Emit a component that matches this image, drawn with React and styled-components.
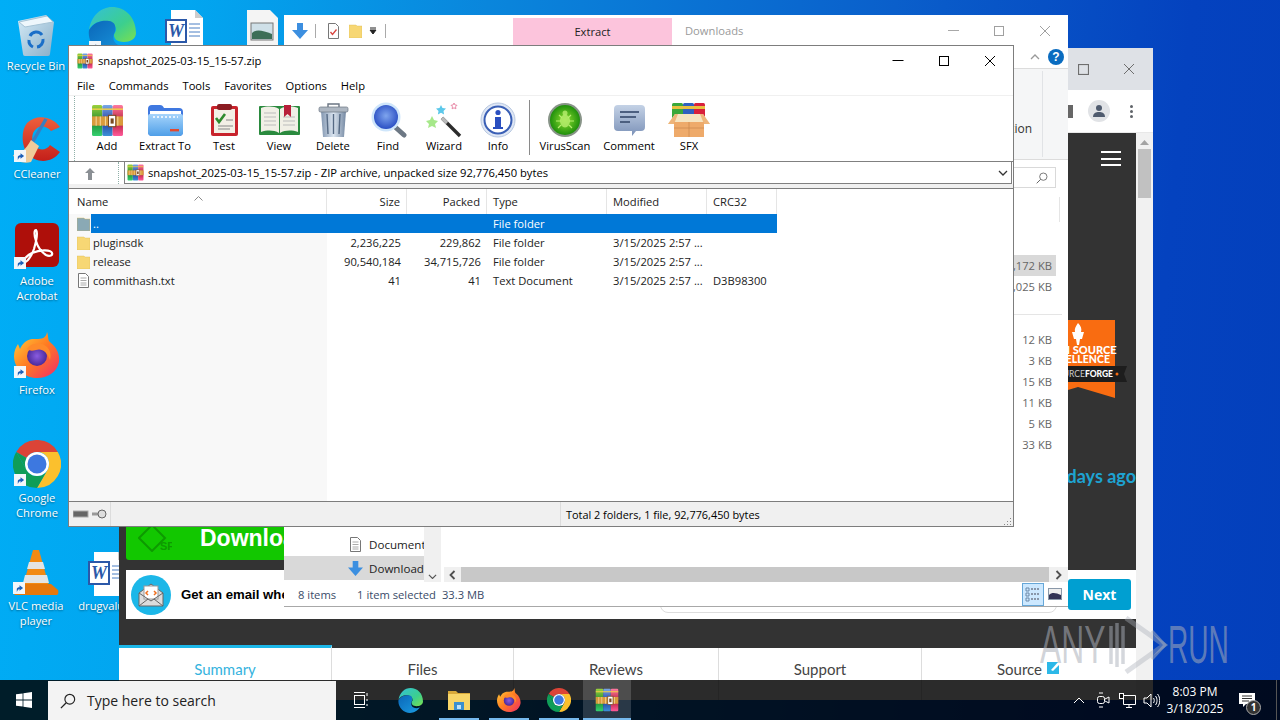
import React from "react";
import styled, { createGlobalStyle } from "styled-components";

const Global = createGlobalStyle`
  html, body { margin: 0; padding: 0; width: 1280px; height: 720px; overflow: hidden; }
  body { font-family: "Open Sans", "Noto Sans", sans-serif; }
  * { box-sizing: border-box; }
`;

const UI = `"Open Sans", "Noto Sans", sans-serif`;

const Desktop = styled.div`
  position: relative; width: 1280px; height: 720px; overflow: hidden;
  background: linear-gradient(96deg, #00aef6 0%, #02a6f0 14%, #0a86dc 36%, #0a5fcb 66%, #0442bf 88%, #033fbb 100%);
  font-family: ${UI}; font-size: 11.2px; color: #000;
`;

/* ---- desktop shortcuts ---- */
const Shortcut = styled.div`
  position: absolute; left: ${p => p.$x}px; top: ${p => p.$y}px; width: 72px;
  display: flex; flex-direction: column; align-items: center;
`;
const ShortcutArt = styled.div`
  position: relative; height: 50px; width: 100%;
  display: flex; align-items: flex-end; justify-content: center;
`;
const ShortcutBadge = styled.span`
  position: absolute; left: 13px; bottom: 2px; width: 12px; height: 12px; background: #f2f6fa;
  display: flex; align-items: center; justify-content: center;
`;
const ShortcutLabel = styled.div`
  margin-top: 2px; color: #fff; font-size: 11.2px; line-height: 15px; text-align: center; white-space: pre-line;
  text-shadow: 0 1px 2px rgba(0,0,0,.45);
`;

/* ---- shared window bits ---- */
const Win = styled.section`
  position: absolute; left: ${p => p.$x}px; top: ${p => p.$y}px; width: ${p => p.$w}px; height: ${p => p.$h}px;
  display: flex; flex-direction: column; overflow: hidden;
`;
const CtrlRow = styled.div`
  display: flex; margin-left: auto; height: 100%; align-items: center;
`;
const CtrlBtn = styled.span`
  width: 46px; display: flex; justify-content: center; align-items: center;
`;

/* ---- browser ---- */
const BrowserTitle = styled.div`
  height: 42px; flex: none; background: #dee1e6; display: flex; padding-right: 1px;
`;
const BrowserBar = styled.div`
  height: 43px; flex: none; background: #fff; display: flex; align-items: center; justify-content: flex-end;
  padding-right: 20px; border-bottom: 1px solid #e8e8e8;
`;
const ExtensionStub = styled.span` width: 5px; height: 13px; background: #666; margin-right: 15px; `;
const Avatar = styled.span`
  width: 22px; height: 22px; border-radius: 50%; background: #e1e3e6; display: flex; align-items: center; justify-content: center;
  margin-right: 20px;
`;
const Dots = styled.span`
  display: flex; flex-direction: column; gap: 2px;
  i { width: 3px; height: 3px; border-radius: 50%; background: #5f6368; display: block; }
`;
const BrowserBody = styled.div` flex: 1; display: flex; min-height: 0; `;
const Page = styled.div` flex: 1; background: #333; display: flex; flex-direction: column; font-family: Lato, sans-serif; `;
const PageUpper = styled.div`
  height: 437px; flex: none; padding: 18px 0 10px 7px; display: flex; flex-direction: column;
`;
const Burger = styled.span`
  align-self: flex-end; margin-right: 15px; width: 20px; height: 15px;
  display: flex; flex-direction: column; justify-content: space-between;
  i { display: block; height: 2px; background: #fff; }
`;
const Badge = styled.div` align-self: flex-end; margin: 153px 6px 0 0; height: 81px; `;
const Updated = styled.div`
  align-self: flex-end; margin-top: 64px; color: #1ea3d2; font-size: 18px; font-weight: 700; line-height: 24px; white-space: nowrap;
`;
const DownloadBtn = styled.div`
  margin-top: auto; width: 640px; height: 44px; background: #12c700; border-radius: 3px;
  display: flex; align-items: center; padding-left: 12px; color: #fff;
  font: 700 23px "Liberation Sans", sans-serif;
`;
const SfMark = styled.span` width: 62px; flex: none; display: flex; `;
const EmailRow = styled.div`
  height: 49px; flex: none; margin-left: 7px; background: #fff; display: flex; align-items: center; padding: 0 5px;
`;
const EmailBadge = styled.span`
  width: 40px; height: 40px; border-radius: 50%; background: #1cb7e8; display: flex; align-items: center; justify-content: center; flex: none;
`;
const EmailText = styled.span`
  margin-left: 10px; font: 700 13.2px "Liberation Sans", sans-serif; color: #000; white-space: nowrap;
`;
const EmailInput = styled.span`
  margin-left: auto; align-self: flex-end; margin-bottom: 6px; width: 397px; height: 24px;
  border: 1px solid #ddd; border-radius: 8px;
`;
const NextBtn = styled.span`
  margin-left: 11px; width: 63px; height: 31px; border-radius: 3px; background: #009fd1; color: #fff;
  display: flex; align-items: center; justify-content: center; font: 700 14px "Open Sans", sans-serif;
`;
const PageGap = styled.div` height: 26px; flex: none; `;
const Tabs = styled.div` height: 55px; flex: none; display: flex; `;
const PageTab = styled.div`
  width: ${p => p.$w}px; background: #fff; margin-top: ${p => p.$on ? 0 : 3}px; padding-top: 12px;
  border-top: ${p => p.$on ? "3px solid #1cb7e8" : "0 solid transparent"};
  border-right: ${p => p.$end ? 0 : "1px solid #ddd"};
  color: ${p => p.$on ? "#35b3de" : "#444"}; font-size: 15px; line-height: 18px; text-align: center;
  display: flex; justify-content: center; align-items: flex-start; gap: 5px;
`;
const Scrollbar = styled.div`
  width: 17px; flex: none; background: #f1f1f1; display: flex; flex-direction: column; align-items: center; padding-top: 7px;
`;
const ScrollThumb = styled.span` width: 13px; height: 49px; background: #c1c1c1; margin-top: 4px; `;

/* ---- explorer ---- */
const ExplorerFrame = styled(Win)` background: #fff; border-bottom: 1px solid #a8a8a8; `;
const ExTitle = styled.div` height: 31px; flex: none; display: flex; align-items: center; `;
const QuickBar = styled.div` width: 229px; flex: none; display: flex; align-items: center; padding-left: 8px; `;
const QuickIcon = styled.span` display: flex; margin-left: ${p => p.$m}px; `;
const QuickSep = styled.span` width: 1px; height: 14px; background: #aaa; margin-left: ${p => p.$m}px; `;
const ContextTab = styled.div`
  width: 159px; height: 27px; align-self: flex-start; margin-top: 3px; background: #fcc4dc; display: flex; align-items: center; justify-content: center;
  font-size: 11.2px; color: #222;
`;
const TitleGhost = styled.div` margin-left: 13px; color: #9a9a9a; font-size: 11.2px; `;
const RibbonTabs = styled.div`
  height: 23px; flex: none; display: flex; justify-content: flex-end; align-items: center; padding-right: 4px; gap: 8px;
  border-bottom: 1px solid #dcdcdc;
`;
const Help = styled.span`
  width: 16px; height: 16px; border-radius: 50%; background: #0a6cc0; color: #fff;
  font: 700 12px/16px "Liberation Sans", sans-serif; text-align: center;
`;
const Ribbon = styled.div`
  height: 91px; flex: none; background: #f5f6f7; border-bottom: 1px solid #dcdcdc;
  display: flex; align-items: center; justify-content: flex-end; padding-right: 25px;
`;
const RibbonGroup = styled.div` font-size: 12px; color: #333; margin-right: 10px; margin-top: 28px; `;
const RibbonRule = styled.span` width: 1px; height: 86px; background: #e1e3e6; `;
const ExAddress = styled.div` height: 30px; flex: none; display: flex; justify-content: flex-end; align-items: flex-start; padding: 7px 12px 0 0; `;
const SearchBox = styled.div`
  width: 220px; height: 21px; border: 1px solid #d9d9d9; display: flex; align-items: center; justify-content: flex-end; padding-right: 7px;
`;
const ExBody = styled.div` flex: 1; min-height: 0; display: flex; `;
const NavPane = styled.div`
  width: 140px; flex: none; display: flex; flex-direction: column; justify-content: flex-end; padding-bottom: 2px;
`;
const NavRow = styled.div`
  height: 24px; flex: none; display: flex; align-items: center; gap: 6px; padding-left: 64px; overflow: hidden; white-space: nowrap;
  background: ${p => p.$on ? "#d9d9d9" : "transparent"}; color: #222; font-size: 11.6px;
`;
const NavGlyph = styled.span` width: 15px; flex: none; display: flex; justify-content: center; `;
const NavScroll = styled.div`
  width: 17px; flex: none; background: #f0f0f0; display: flex; align-items: flex-end; justify-content: center; padding-bottom: 3px;
`;
const FileArea = styled.div` flex: 1; min-width: 0; margin-left: 3px; display: flex; flex-direction: column; `;
const FileList = styled.div` flex: 1; min-height: 0; padding: 7px 12px 0 0; display: flex; flex-direction: column; `;
const ColumnRule = styled.span` align-self: flex-end; width: 1px; height: 25px; flex: none; background: #e5e5e5; margin-right: -4px; margin-bottom: 33px; `;
const FileRow = styled.div`
  height: 21px; flex: none; width: 43px; align-self: flex-end; padding-right: 4px;
  display: flex; align-items: center; justify-content: flex-end; font-size: 11.2px; color: #666; white-space: nowrap;
  background: ${p => p.$on ? "#d9d9d9" : "transparent"};
`;
const GroupRule = styled.span` height: 1px; flex: none; background: #e5e5e5; margin: 17px -6px 14px 0; `;
const HScroll = styled.div` height: 15px; flex: none; display: flex; align-items: center; background: #f0f0f0; `;
const HArrow = styled.span` width: ${p => p.$w}px; flex: none; display: flex; justify-content: center; `;
const HThumb = styled.span` flex: 1; height: 100%; background: #c8c8c8; `;
const ExStatus = styled.div` height: 24px; flex: none; display: flex; align-items: center; color: #3a4c68; font-size: 11.2px; padding: 0 6px 0 14px; `;
const ExStat = styled.span` margin-right: ${p => p.$m}px; white-space: nowrap; `;
const ViewBtn = styled.span`
  margin-left: ${p => p.$auto ? "auto" : "4px"}; width: ${p => p.$on ? 22 : 14}px; height: ${p => p.$on ? 23 : 14}px;
  display: flex; align-items: center; justify-content: center;
  background: ${p => p.$on ? "#cce8ff" : "transparent"}; border: ${p => p.$on ? "1px solid #66a7d8" : "0"};
`;

/* ---- WinRAR ---- */
const RarFrame = styled(Win)` background: #fff; border: 1px solid #7d7d7d; `;
const RarTitle = styled.div` height: 29px; flex: none; display: flex; align-items: center; padding-left: 8px; gap: 5px; font-size: 11.2px; `;
const RarMenu = styled.div` height: 20px; flex: none; display: flex; align-items: center; padding-left: 8px; gap: 14px; font-size: 11.2px; `;
const RarToolbar = styled.div`
  height: 66px; flex: none; border-top: 1px solid #f0f0f0; display: flex; padding-left: 5px;
`;
const Grip = styled.span` width: 1px; flex: none; margin-right: 5px; border-left: 1px dotted #8fb0a8; `;
const Tool = styled.div`
  width: ${p => p.$w}px; flex: none; display: flex; flex-direction: column; align-items: center; padding-top: 6px; font-size: 11.2px; line-height: 16px; white-space: nowrap;
`;
const ToolArt = styled.div` height: 36px; flex: none; display: flex; align-items: center; justify-content: center; `;
const ToolSep = styled.span` width: 1px; flex: none; margin: 4px 0 6px 5px; background: #8a8a8a; `;
const AddressRow = styled.div`
  height: 23px; flex: none; border-top: 1px solid #808080; display: flex; align-items: stretch;
`;
const UpCell = styled.div` width: 55px; flex: none; display: flex; align-items: center; padding-left: 15px; `;
const AddressGrip = styled.span` margin-left: auto; margin-right: 5px; width: 1px; height: 100%; border-left: 1px dotted #8fb0a8; `;
const Combo = styled.div`
  flex: 1; margin-right: 1px; border-left: 1px solid #808080; border-bottom: 1px solid #808080; border-right: 1px solid #808080; display: flex; align-items: center; gap: 4px; padding-left: 2px; font-size: 11.2px;
  svg:last-child { margin-left: auto; margin-right: 3px; }
`;
const ListGap = styled.div` height: 4px; flex: none; background: #f0f0f0; `;
const ListPane = styled.div`
  flex: 1; min-height: 0; border-top: 1px solid #7d7d7d;
  background: linear-gradient(to right, #f8f8f8 258px, #fff 258px);
  position: relative;
`;
const COLS = "258px 80px 80px 120px 100px 70px";
const ListHead = styled.div` display: grid; grid-template-columns: ${COLS}; width: 708px; height: 25px; background: #fff; `;
const HeadCell = styled.div`
  padding: 0 ${p => p.$r ? 6 : 0}px 0 ${p => p.$i || 0}px; line-height: 25px; text-align: ${p => p.$r ? "right" : "left"};
  border-right: 1px solid #e5e5e5; font-size: 11.2px; color: #222; white-space: nowrap;
`;
const SortCaret = styled.span` position: absolute; left: 125px; top: 0; `;
const ListRow = styled.div`
  display: grid; grid-template-columns: ${COLS}; width: 708px; height: 19px; line-height: 19px; font-size: 11.2px;
  color: ${p => p.$on ? "#fff" : "#222"}; white-space: nowrap;
  background: ${p => p.$on ? "linear-gradient(to right, transparent 22px, #0078d7 22px)" : "transparent"};
`;
const NameCell = styled.div` padding-left: 8px; display: flex; align-items: center; gap: 3px; `;
const ListCell = styled.div`
  padding: 0 ${p => p.$r ? 6 : 0}px 0 ${p => p.$i || 0}px; text-align: ${p => p.$r ? "right" : "left"}; overflow: hidden;
`;
const RarStatus = styled.div` height: 25px; flex: none; border-top: 1px solid #7d7d7d; background: #f0f0f0; display: flex; align-items: stretch; font-size: 10.9px; `;
const StatusCell = styled.div`
  width: ${p => p.$w}px; flex: none; border-right: 1px solid #dcdcdc; display: flex; align-items: center; padding-left: 4px;
`;
const StatusText = styled.div` flex: 1; display: flex; align-items: center; padding: 0 1px 0 5px; svg { margin-left: auto; align-self: flex-end; } `;

/* ---- taskbar ---- */
const Taskbar = styled.footer`
  position: absolute; left: 0; top: 680px; width: 1280px; height: 40px; background: rgba(0,0,0,.83); display: flex; color: #fff;
`;
const Start = styled.div` width: 48px; flex: none; display: flex; align-items: center; justify-content: center; `;
const SearchField = styled.div`
  width: 288px; margin-top: 1px; flex: none; background: #f3f3f3; color: #222; display: flex; align-items: center; gap: 11px; padding-left: 12px;
  font-size: 14px;
`;
const TaskApp = styled.div`
  width: ${p => p.$w}px; flex: none; position: relative; display: flex; align-items: center; justify-content: center;
  background: ${p => p.$on ? "rgba(255,255,255,.16)" : "transparent"};
`;
const Running = styled.i`
  position: absolute; bottom: 0; left: 50%; transform: translateX(-50%); height: 2px; width: ${p => p.$full ? "100%" : "40px"}; background: #76b9ed;
`;
const Tray = styled.div` margin-left: auto; display: flex; align-items: stretch; `;
const TrayIcon = styled.span` width: 24px; display: flex; align-items: center; justify-content: center; `;
const Clock = styled.div`
  width: 64px; font-size: 12px; line-height: 17px; text-align: center; display: flex; flex-direction: column; justify-content: center; white-space: nowrap;
`;
const Notify = styled.span` width: 40px; display: flex; align-items: center; justify-content: center; position: relative; `;
const NotifyCount = styled.span`
  position: absolute; left: 19px; top: 20px; width: 15px; height: 15px; border-radius: 50%; background: #333; border: 1px solid #aaa;
  font-size: 10px; line-height: 13px; text-align: center; color: #fff; font-weight: 700;
`;
const ShowDesktop = styled.span` width: 1px; margin: 0 3px 0 9px; background: #555; `;

/* ---- watermark ---- */
const Watermark = styled.div`
  position: absolute; left: 1040px; top: 616px; height: 58px; display: flex; align-items: center; pointer-events: none;
`;
const WmText = styled.span`
  font: 400 53px/58px "Liberation Sans", sans-serif; color: rgba(170,175,185,.55); transform: scaleX(${p => p.$s}); transform-origin: left center;
  width: ${p => p.$w}px; white-space: nowrap; display: block;
`;

/* ---- drawings ---- */
const Close = ({ c = "#000", s = 12 }) => (
  <svg width={s} height={s} viewBox="0 0 12 12"><path d="M1 1l10 10M11 1L1 11" stroke={c} strokeWidth="1" fill="none" /></svg>
);
const Max = ({ c = "#000", s = 10 }) => (
  <svg width={s} height={s} viewBox="0 0 10 10"><rect x=".5" y=".5" width="9" height="9" stroke={c} fill="none" /></svg>
);
const Min = ({ c = "#000", s = 11 }) => (
  <svg width={s} height="3" viewBox="0 0 11 3"><path d="M0 1.5h11" stroke={c} /></svg>
);
const Arrow = () => (
  <svg width="9" height="9" viewBox="0 0 10 10"><path d="M2 9V5.5C2 4 3.5 3.5 5 3.5V1.5L9 4.5 5 7.5V5.5C4 5.5 3 6.5 2 9z" fill="#1b5fb8" /></svg>
);

const RarIcon = ({ s = 32 }) => (
  <svg width={s} height={s} viewBox="0 0 32 32">
    <defs>
      <linearGradient id="rg" x1="0" x2="0" y1="0" y2="1"><stop offset="0" stopColor="#9bd13c" /><stop offset=".55" stopColor="#1f8a2f" /><stop offset="1" stopColor="#35d070" /></linearGradient>
      <linearGradient id="rb" x1="0" x2="0" y1="0" y2="1"><stop offset="0" stopColor="#78a8e8" /><stop offset=".55" stopColor="#243fa0" /><stop offset="1" stopColor="#3c90d8" /></linearGradient>
      <linearGradient id="rr" x1="0" x2="0" y1="0" y2="1"><stop offset="0" stopColor="#ff7aa0" /><stop offset=".55" stopColor="#b51f3a" /><stop offset="1" stopColor="#ff5a9a" /></linearGradient>
    </defs>
    <rect x="1" y="1" width="10" height="30" rx="1.5" fill="url(#rg)" />
    <rect x="11" y="1" width="10" height="30" rx="1.5" fill="url(#rb)" />
    <rect x="21" y="1" width="10" height="30" rx="1.5" fill="url(#rr)" />
    <path d="M1 5h30" stroke="#f3d048" strokeWidth="1.400" />
    <rect x="1" y="12" width="30" height="9" fill="#d99b3c" />
    <path d="M5 12v9M9 12v9M14 12v9M26 12v9" stroke="#f4d79a" strokeWidth="1" />
    <rect x="17" y="11" width="7" height="11" fill="#fff" stroke="#7a4a20" />
    <rect x="19" y="14" width="3" height="5" fill="#7a4a20" />
  </svg>
);
const IcExtract = () => (
  <svg width="37" height="34" viewBox="0 0 37 34">
    <defs><linearGradient id="fe" x1="0" x2="0" y1="0" y2="1"><stop offset="0" stopColor="#a6d4fb" /><stop offset="1" stopColor="#4f9fe8" /></linearGradient></defs>
    <path d="M1 6a4 4 0 014-4h8c2 0 3 1 4 3h15a4 4 0 014 4v20a4 4 0 01-4 4H5a4 4 0 01-4-4z" fill="#3f78e0" />
    <rect x="3" y="8" width="31" height="5" fill="#fff" />
    <path d="M1 13a2 2 0 012-2h31a2 2 0 012 2v16a4 4 0 01-4 4H5a4 4 0 01-4-4z" fill="url(#fe)" />
    <path d="M6 14h25" stroke="#fff" strokeDasharray="2 2" strokeWidth="1.4" />
    <rect x="23" y="26" width="9" height="2.4" fill="#e2492f" />
  </svg>
);
const IcTest = () => (
  <svg width="29" height="34" viewBox="0 0 29 34">
    <rect x="1" y="3" width="27" height="30" rx="2" fill="#c8232c" />
    <rect x="4" y="6" width="21" height="24" fill="#f3f0e6" />
    <rect x="7" y="1" width="15" height="6" rx="2" fill="#8b1c22" />
    <path d="M6 15l3 4 6-8" stroke="#2e8b2e" strokeWidth="2.6" fill="none" />
    <path d="M16 17h7M8 23h15M8 26h12" stroke="#888" strokeWidth="1.2" />
  </svg>
);
const IcView = () => (
  <svg width="43" height="32" viewBox="0 0 43 32">
    <rect x="1" y="2" width="41" height="29" rx="1" fill="#2a8a3e" />
    <path d="M3 4c6-2 13-2 18 1v24c-5-3-12-3-18-1zM40 4c-6-2-13-2-18 1v24c5-3 12-3 18-1z" fill="#f1efe6" />
    <path d="M6 9h12M6 13h12M6 17h12M6 21h12M25 13h12M25 17h12M25 21h12" stroke="#bbb" />
    <path d="M26 1h7v12l-3.5-3-3.5 3z" fill="#b81f3a" />
  </svg>
);
const IcTrash = () => (
  <svg width="31" height="36" viewBox="0 0 31 36">
    <defs><linearGradient id="tb" x1="0" x2="1" y1="0" y2="0"><stop offset="0" stopColor="#8296b0" /><stop offset=".5" stopColor="#dbe5f0" /><stop offset="1" stopColor="#7488a2" /></linearGradient></defs>
    <path d="M3 9h25l-2 26H5z" fill="url(#tb)" />
    <path d="M9 12l1 20M15.5 12v20M22 12l-1 20" stroke="#566a84" strokeWidth="1.4" />
    <rect x="1" y="5" width="29" height="5" rx="1.5" fill="#aeb7c2" stroke="#6b7583" strokeWidth=".7" />
    <path d="M10 5V2h11v3" stroke="#6b7583" strokeWidth="1.4" fill="none" />
  </svg>
);
const IcFind = () => (
  <svg width="37" height="36" viewBox="0 0 37 36">
    <defs><radialGradient id="fg" cx=".5" cy=".45" r=".6"><stop offset="0" stopColor="#7fa5ee" /><stop offset="1" stopColor="#2348c0" /></radialGradient></defs>
    <path d="M24 24l10 9" stroke="#6d7884" strokeWidth="5" strokeLinecap="round" />
    <circle cx="16" cy="15" r="14.5" fill="#cfe6fb" />
    <circle cx="16" cy="15" r="12" fill="url(#fg)" />
  </svg>
);
const IcWand = () => (
  <svg width="39" height="36" viewBox="0 0 39 36">
    <path d="M17 16l18 18" stroke="#2c2c2c" strokeWidth="3.4" />
    <path d="M17 16l5 5" stroke="#bbb" strokeWidth="3.4" />
    <path d="M7 14l2 4 4 1-3 3 1 4-4-2-4 2 1-4-3-3 4-1z" fill="#a6e88a" />
    <path d="M16 3l1.5 3 3.5.5-2.5 2.500.6 3.500-3.100-1.700-3.100 1.700.6-3.500L11 6.500l3.500-.5z" fill="#5cc8ea" />
    <path d="M29 1l1 2 2 .3-1.500 1.500.4 2-1.900-1-1.900 1 .4-2L26 3.300 28 3z" fill="none" stroke="#e88aa8" />
  </svg>
);
const IcInfo = () => (
  <svg width="36" height="36" viewBox="0 0 36 36">
    <circle cx="18" cy="18" r="17" fill="#dfe7f5" stroke="#b8c8e0" />
    <circle cx="18" cy="18" r="13.500" fill="#fff" stroke="#3a5fb5" strokeWidth="2" />
    <circle cx="18" cy="10.500" r="2.600" fill="#2a4fc0" />
    <path d="M15 15h6v10h2v2h-10v-2h2z" fill="#2a4fc0" />
  </svg>
);
const IcVirus = () => (
  <svg width="36" height="36" viewBox="0 0 36 36">
    <defs><radialGradient id="vg"><stop offset="0" stopColor="#8fe030" /><stop offset="1" stopColor="#1f8f0c" /></radialGradient></defs>
    <circle cx="18" cy="18" r="17" fill="#889488" />
    <circle cx="18" cy="18" r="15" fill="url(#vg)" />
    <ellipse cx="18" cy="19" rx="5" ry="6.500" fill="#b8ee70" opacity=".8" />
    <circle cx="18" cy="11" r="2.500" fill="#b8ee70" opacity=".8" />
    <path d="M12 13l3 3M24 13l-3 3M9 19h5M27 19h-5M11 26l3-3M25 26l-3-3" stroke="#b8ee70" strokeWidth="1.2" />
  </svg>
);
const IcComment = () => (
  <svg width="33" height="33" viewBox="0 0 33 33">
    <defs><linearGradient id="cg" x1="0" x2="0" y1="0" y2="1"><stop offset="0" stopColor="#c4d2e6" /><stop offset="1" stopColor="#7c92b8" /></linearGradient></defs>
    <path d="M5 1h23a4 4 0 014 4v18a4 4 0 01-4 4h-5l-4 5v-5H5a4 4 0 01-4-4V5a4 4 0 014-4z" fill="url(#cg)" />
    <path d="M7 8h19M7 13h16M7 18h10" stroke="#4c5f80" strokeWidth="2" />
  </svg>
);
const IcSfx = () => (
  <svg width="42" height="36" viewBox="0 0 42 36">
    <rect x="4" y="1" width="11" height="16" rx="1.500" fill="#3aa83a" /><rect x="15" y="1" width="11" height="16" rx="1.500" fill="#3060c0" /><rect x="26" y="1" width="11" height="16" rx="1.500" fill="#d8203c" />
    <rect x="4" y="4" width="33" height="3" fill="#e8c040" />
    <path d="M7 12h28l7 10H0z" fill="#f6e4c0" />
    <path d="M7 12L0 22h6l4-10zM35 12l7 10h-6l-4-10z" fill="#eeb57a" />
    <path d="M6 20h30v15H6z" fill="#eeaa6a" />
    <path d="M21 20v15M6 26h30" stroke="#c8874a" strokeWidth=".7" />
  </svg>
);
const MiniFolder = ({ c = "#f7d774", s = 13 }) => (
  <svg width={s} height={s + 1} viewBox="0 0 13 14"><path d="M0 1h7l1 1h5v12H0z" fill={c} stroke="#d8b850" strokeWidth=".4" /></svg>
);
const MiniDoc = ({ s = 13 }) => (
  <svg width={s} height={s + 2} viewBox="0 0 13 15"><path d="M1.500.5h7l3 3v11h-10z" fill="#fff" stroke="#777" /><path d="M3.500 5h6M3.500 7.500h6M3.500 10h6M3.500 12h6" stroke="#aaa" /></svg>
);
const MiniProps = () => (
  <svg width="13" height="16" viewBox="0 0 13 16"><path d="M1.500.5h7l3 3v12h-10z" fill="#fdfdfd" stroke="#777" /><path d="M3.500 9l2 2.500 4-5" stroke="#d8423c" strokeWidth="1.300" fill="none" /></svg>
);
const DownArrow = ({ s = 16 }) => (
  <svg width={s} height={s} viewBox="0 0 16 16"><path d="M5 0h6v7h5l-8 9-8-9h5z" fill="#3c8fe0" /></svg>
);
const WordDoc = () => (
  <svg width="38" height="44" viewBox="0 0 38 44">
    <path d="M6 0h24l8 8v36H6z" fill="#fff" />
    <path d="M30 0v8h8z" fill="#ccc" />
    <path d="M24 14h11M24 18h11M24 22h11M24 26h11" stroke="#4a7fc4" />
    <rect x="1" y="10" width="20" height="22" fill="#fff" stroke="#2b58a8" strokeWidth="2" />
    <text x="11" y="27" fontFamily="Liberation Serif" fontStyle="italic" fontWeight="700" fontSize="18" fill="#2b58a8" textAnchor="middle">W</text>
  </svg>
);
const ImageDoc = () => (
  <svg width="32" height="44" viewBox="0 0 32 44">
    <path d="M1 0h23l8 8v36H1z" fill="#f4f4f4" />
    <rect x="5" y="13" width="22" height="17" fill="#cfe0e8" stroke="#777" />
    <path d="M6 23c4-4 10-3 20 1v5H6z" fill="#3c6e58" />
  </svg>
);
const RecycleBin = () => (
  <svg width="40" height="42" viewBox="0 0 40 42">
    <defs><linearGradient id="bin" x1="0" x2="1" y1="0" y2="1"><stop offset="0" stopColor="#d6ecf8" /><stop offset="1" stopColor="#88aec8" /></linearGradient></defs>
    <path d="M2 7L30 1l8 7-4 32a2 2 0 01-2 2H9a2 2 0 01-2-2z" fill="url(#bin)" />
    <path d="M3 8l28-6 6 6-28 5z" fill="#eef7fc" stroke="#a6c4d6" />
    <path d="M14 22a7 7 0 0112-1M27 25a7 7 0 01-6 8M17 33a7 7 0 01-4-7" stroke="#1b6fc8" strokeWidth="3" fill="none" />
  </svg>
);
const EdgeIcon = ({ s = 48 }) => (
  <svg width={s} height={s} viewBox="0 0 48 48">
    <defs>
      <linearGradient id="e1" x1="0" x2="1" y1="0" y2="1"><stop offset="0" stopColor="#34c0d8" /><stop offset=".6" stopColor="#3ccf8e" /><stop offset="1" stopColor="#7be04f" /></linearGradient>
      <linearGradient id="e2" x1="0" x2="1" y1="0" y2="1"><stop offset="0" stopColor="#0a66b8" /><stop offset="1" stopColor="#1b9de2" /></linearGradient>
    </defs>
    <path d="M1 23C3 9 13 0 24 0c13 0 24 10 24 26 0 6-6 9-12 9-8 0-10-4-10-7 0-2 2-3 2-5 0-6-6-9-12-9C9 14 3 18 1 23z" fill="url(#e1)" />
    <path d="M1 23c5-8 13-10 20-9 8 1 7 9 5 13-3 9 6 15 16 10-4 6-11 11-19 11C10 48-1 35 1 23z" fill="url(#e2)" />
  </svg>
);
const CCleaner = () => (
  <svg width="48" height="48" viewBox="0 0 48 48">
    <defs><linearGradient id="cc" x1="0" x2="0" y1="0" y2="1"><stop offset="0" stopColor="#ee5f3c" /><stop offset="1" stopColor="#c41f1a" /></linearGradient></defs>
    <path d="M47 11C40 1 24-3 14 7 8 14 8 30 15 38c9 10 24 9 32-2l-10-7c-3 5-10 6-14 2-5-5-5-14 0-18 4-4 11-3 15 2z" fill="url(#cc)" />
    <path d="M33 3L19 27" stroke="#3a7fc0" strokeWidth="3.400" />
    <path d="M18 24l8 6-8 16C11 48 3 46 0 39c7 0 13-6 18-15z" fill="#eecb9a" />
  </svg>
);
const Acrobat = () => (
  <svg width="44" height="48" viewBox="0 0 44 48">
    <rect width="44" height="44" rx="6" fill="#ae0f0a" />
    <path d="M21 7c-2 0-2 5 0 11 2 7 7 12 10 14 4 2 7 0 6-2-1-3-11-4-20 0-6 3-10 8-8 9 3 1 8-7 10-13 2-7 4-17 2-19z" fill="none" stroke="#fff" strokeWidth="2.200" />
  </svg>
);
const Firefox = ({ s = 46, h = 48 }) => (
  <svg width={s} height={h * s / 46} viewBox={`0 0 46 ${h}`}>
    <defs>
      <linearGradient id="ff" x1="0" x2="1" y1="0" y2="1"><stop offset="0" stopColor="#ffd43a" /><stop offset=".5" stopColor="#ff7a22" /><stop offset="1" stopColor="#f02a6a" /></linearGradient>
      <radialGradient id="fp"><stop offset="0" stopColor="#8a5ce0" /><stop offset="1" stopColor="#4a2a9a" /></radialGradient>
    </defs>
    <path d="M33 0c2 5 0 8 4 11 6 5 9 12 8 19-2 10-11 16-22 16C10 46 0 36 0 24c0-5 2-9 4-12l2 5c2-5 6-9 12-10 7 0 14 1 15-7z" fill="url(#ff)" />
    <circle cx="23" cy="24" r="10" fill="url(#fp)" />
    <path d="M13 17c3-6 14-8 20-2 4 4 4 9 3 13-3-8-8-12-14-10-4 1-6 1-9-1z" fill="#ff8a2a" />
  </svg>
);
const Chrome = ({ s = 48 }) => (
  <svg width={s} height={s} viewBox="0 0 48 48">
    <path d="M3.200 12A24 24 0 0144.800 12H24A12 12 0 0013.600 18Z" fill="#db4437" />
    <path d="M44.800 12A24 24 0 0124 48L34.400 30A12 12 0 0024 12Z" fill="#fbc02d" />
    <path d="M24 48A24 24 0 013.200 12L13.600 30A12 12 0 0034.400 30Z" fill="#0f9d58" />
    <path d="M3.200 12L13.600 30 16 27 13.600 18z" fill="#0f9d58" />
    <circle cx="24" cy="24" r="12" fill="#fff" />
    <circle cx="24" cy="24" r="9.500" fill="#3d78e0" />
  </svg>
);
const VlcCone = () => (
  <svg width="46" height="48" viewBox="0 0 46 48">
    <path d="M20 2h6l10 36H10z" fill="#f28a14" />
    <path d="M16 14h14l2 7H14zM12 27h22l2 8H10z" fill="#e4e4e4" />
    <path d="M8 36h30l7 6c1 3 0 5-2 5H3c-2 0-3-2-2-5z" fill="#e6780c" />
  </svg>
);
const ExplorerApp = () => (
  <svg width="24" height="22" viewBox="0 0 24 22">
    <path d="M1 2h8l2 2h12v5H1z" fill="#d8a93a" /><rect x="1" y="5" width="22" height="16" fill="#f7d568" />
    <rect x="7" y="13" width="10" height="8" fill="#3a8fd0" /><rect x="10" y="16" width="4" height="4" fill="#bfe2f8" />
  </svg>
);
const LogoWin = () => (
  <svg width="16" height="16" viewBox="0 0 16 16"><path d="M0 2.300l6.600-.9v6.200H0zM7.400 1.300L16 0v7.600H7.400zM0 8.400h6.600v6.200L0 13.700zM7.400 8.400H16V16l-8.600-1.200z" fill="#fff" /></svg>
);
const Magnifier = ({ c = "#222", s = 16 }) => (
  <svg width={s} height={s} viewBox="0 0 18 18"><circle cx="11" cy="7" r="5.500" fill="none" stroke={c} strokeWidth="1.300" /><path d="M7 11l-6 6" stroke={c} strokeWidth="1.500" /></svg>
);
const Chevron = ({ d = "down", c = "#555", w = 10 }) => (
  <svg width={w} height={w * .6} viewBox="0 0 10 6"><path d={d === "down" ? "M1 1l4 4 4-4" : "M1 5l4-4 4 4"} stroke={c} strokeWidth="1.300" fill="none" /></svg>
);
const SideChevron = ({ d }) => (
  <svg width="7" height="10" viewBox="0 0 7 10"><path d={d === "l" ? "M5.500 1L1.500 5l4 4" : "M1.500 1l4 4-4 4"} stroke="#505050" strokeWidth="1.800" fill="none" /></svg>
);

const SHORTCUTS = [
  { x: 0, y: 6, label: "Recycle Bin", art: <RecycleBin /> },
  { x: 76, y: 5, label: "", art: <EdgeIcon />, link: true },
  { x: 148, y: 4, label: "", art: <WordDoc /> },
  { x: 226, y: 4, label: "", art: <ImageDoc /> },
  { x: 1, y: 114, label: "CCleaner", art: <CCleaner />, link: true },
  { x: 1, y: 221, label: "Adobe\nAcrobat", art: <Acrobat />, link: true },
  { x: 1, y: 330, label: "Firefox", art: <Firefox />, link: true },
  { x: 1, y: 438, label: "Google\nChrome", art: <Chrome />, link: true },
  { x: 0, y: 546, label: "VLC media\nplayer", art: <VlcCone />, link: true },
  { x: 71, y: 546, label: "drugvalues", art: <WordDoc /> },
];

const TOOLS = [
  ["Add", 54, <RarIcon s={33} />], ["Extract To", 62, <IcExtract />], ["Test", 56, <IcTest />], ["View", 54, <IcView />],
  ["Delete", 54, <IcTrash />], ["Find", 56, <IcFind />], ["Wizard", 56, <IcWand />], ["Info", 52, <IcInfo />],
  null,
  ["VirusScan", 70, <IcVirus />], ["Comment", 58, <IcComment />], ["SFX", 62, <IcSfx />],
];

const ROWS = [
  { name: "pluginsdk", size: "2,236,225", packed: "229,862", type: "File folder", mod: "3/15/2025 2:57 ...", crc: "", icon: <MiniFolder /> },
  { name: "release", size: "90,540,184", packed: "34,715,726", type: "File folder", mod: "3/15/2025 2:57 ...", crc: "", icon: <MiniFolder /> },
  { name: "commithash.txt", size: "41", packed: "41", type: "Text Document", mod: "3/15/2025 2:57 ...", crc: "D3B98300", icon: <MiniDoc /> },
];

const Browser = () => (
  <Win $x={119} $y={48} $w={1034} $h={652}>
    <BrowserTitle>
      <CtrlRow>
        <CtrlBtn><Max c="#6e6e6e" s={11} /></CtrlBtn>
        <CtrlBtn><Close c="#6e6e6e" /></CtrlBtn>
      </CtrlRow>
    </BrowserTitle>
    <BrowserBar>
      <ExtensionStub />
      <Avatar>
        <svg width="14" height="14" viewBox="0 0 14 14"><circle cx="7" cy="4" r="3" fill="#4f5b6e" /><path d="M1 13c0-4 3-5 6-5s6 1 6 5z" fill="#4f5b6e" /></svg>
      </Avatar>
      <Dots><i /><i /><i /></Dots>
    </BrowserBar>
    <BrowserBody>
      <Page>
        <PageUpper>
          <Burger><i /><i /><i /></Burger>
          <Badge>
            <svg width="100" height="81" viewBox="0 0 100 81">
              <path d="M11 1h74v46H11z" fill="#f96c11" />
              <path d="M11 63h74v16L48 68 11 79z" fill="#f96c11" />
              <path d="M3 47h94l-3 8 3 8H3z" fill="#1d1d1d" />
              <path d="M48 4c3 3 4 6 3 9h3l-2 7h-2l-1 6h-2l-1-6h-2l-2-7h3c-1-3 1-6 3-9z" fill="#fff" />
              <text x="48" y="35" textAnchor="middle" fontFamily="Lato" fontWeight="900" fontSize="11" fill="#fff">OPEN SOURCE</text>
              <text x="48" y="44" textAnchor="middle" fontFamily="Lato" fontWeight="900" fontSize="10.500" fill="#fff">EXCELLENCE</text>
              <text x="83" y="58" textAnchor="end" fontFamily="Lato" fontWeight="400" fontSize="8.500" fill="#ccc">SOURCE<tspan fontWeight="900" fill="#fff">FORGE</tspan></text>
              <circle cx="87" cy="55" r="1.500" fill="#f96c11" />
            </svg>
          </Badge>
          <Updated>Last Update: 3 days ago</Updated>
          <DownloadBtn>
            <SfMark>
              <svg width="34" height="28" viewBox="0 0 34 28"><path d="M14 1L1 14l13 13 13-13z" fill="none" stroke="#0d9a00" strokeWidth="2" /><text x="22" y="26" fontFamily="Liberation Sans" fontWeight="700" fontSize="11" fill="#0d9a00">SF</text></svg>
            </SfMark>
            Download
          </DownloadBtn>
        </PageUpper>
        <EmailRow>
          <EmailBadge>
            <svg width="26" height="24" viewBox="0 0 26 24">
              <path d="M1 10l12-9 12 9v13H1z" fill="#dcdcdc" stroke="#666" />
              <rect x="6" y="3" width="14" height="13" fill="#fff" stroke="#999" />
              <path d="M10 8l-2 2 2 2M16 8l2 2-2 2" stroke="#f07020" strokeWidth="1.500" fill="none" />
              <path d="M1 10l12 8 12-8M1 23l9-7M25 23l-9-7" stroke="#666" fill="none" />
            </svg>
          </EmailBadge>
          <EmailText>Get an email when</EmailText>
          <EmailInput />
          <NextBtn>Next</NextBtn>
        </EmailRow>
        <PageGap />
        <Tabs>
          <PageTab $w={213} $on>Summary</PageTab>
          <PageTab $w={182}>Files</PageTab>
          <PageTab $w={205}>Reviews</PageTab>
          <PageTab $w={203}>Support</PageTab>
          <PageTab $w={214} $end>
            Source
            <svg width="14" height="14" viewBox="0 0 14 14"><rect x="0" y="2" width="12" height="12" fill="#2cb8e8" /><path d="M4 10l8-9 2 2-8 8z" fill="#fff" /></svg>
          </PageTab>
        </Tabs>
      </Page>
      <Scrollbar>
        <svg width="9" height="5" viewBox="0 0 9 5"><path d="M4.500 0L9 5H0z" fill="#a3a3a3" /></svg>
        <ScrollThumb />
      </Scrollbar>
    </BrowserBody>
  </Win>
);

const Explorer = () => (
  <ExplorerFrame $x={284} $y={15} $w={784} $h={592}>
    <ExTitle>
      <QuickBar>
        <DownArrow />
        <QuickSep $m={7} />
        <QuickIcon $m={11}><MiniProps /></QuickIcon>
        <QuickIcon $m={9}><MiniFolder s={13} /></QuickIcon>
        <QuickIcon $m={6}><svg width="10" height="8" viewBox="0 0 10 8"><path d="M2 1h6M2 3l3 4 3-4z" stroke="#222" fill="#222" /></svg></QuickIcon>
        <QuickSep $m={7} />
      </QuickBar>
      <ContextTab>Extract</ContextTab>
      <TitleGhost>Downloads</TitleGhost>
      <CtrlRow>
        <CtrlBtn><Min c="#a8a8a8" /></CtrlBtn>
        <CtrlBtn><Max c="#a0a0a0" /></CtrlBtn>
        <CtrlBtn><Close c="#a0a0a0" /></CtrlBtn>
      </CtrlRow>
    </ExTitle>
    <RibbonTabs>
      <Chevron d="up" c="#999" />
      <Help>?</Help>
    </RibbonTabs>
    <Ribbon>
      <RibbonGroup>Location</RibbonGroup>
      <RibbonRule />
    </Ribbon>
    <ExAddress>
      <SearchBox><Magnifier c="#666" s={12} /></SearchBox>
    </ExAddress>
    <ExBody>
      <NavPane>
        <NavRow><NavGlyph><MiniDoc s={13} /></NavGlyph>Documents</NavRow>
        <NavRow $on><NavGlyph><DownArrow s={15} /></NavGlyph>Downloads</NavRow>
      </NavPane>
      <NavScroll><Chevron c="#555" w={9} /></NavScroll>
      <FileArea>
        <FileList>
          <ColumnRule />
          <FileRow $on>34,172 KB</FileRow>
          <FileRow>58,025 KB</FileRow>
          <GroupRule />
          {["12 KB", "3 KB", "15 KB", "11 KB", "5 KB", "33 KB"].map(s => <FileRow key={s}>{s}</FileRow>)}
        </FileList>
        <HScroll>
          <HArrow $w={17}><SideChevron d="l" /></HArrow>
          <HThumb />
          <HArrow $w={19}><SideChevron d="r" /></HArrow>
        </HScroll>
      </FileArea>
    </ExBody>
    <ExStatus>
      <ExStat $m={21}>8 items</ExStat>
      <ExStat $m={6}>1 item selected</ExStat>
      <ExStat $m={0}>33.3 MB</ExStat>
      <ViewBtn $on $auto>
        <svg width="16" height="15" viewBox="0 0 16 15"><path d="M1 1h3v3H1zM1 6h3v3H1zM1 11h3v3H1z" fill="none" stroke="#6a88a8" /><path d="M6 2h9M6 7h9M6 12h9" stroke="#445" strokeDasharray="2 1" /></svg>
      </ViewBtn>
      <ViewBtn>
        <svg width="14" height="12" viewBox="0 0 14 12"><rect x=".5" y=".5" width="13" height="11" fill="#eee" stroke="#8a98a8" /><path d="M1 7c3-3 7-2 12 0v4H1z" fill="#335" /></svg>
      </ViewBtn>
    </ExStatus>
  </ExplorerFrame>
);

const WinRar = () => (
  <RarFrame $x={68} $y={45} $w={946} $h={482}>
    <RarTitle>
      <RarIcon s={16} />
      snapshot_2025-03-15_15-57.zip
      <CtrlRow>
        <CtrlBtn><Min s={12} /></CtrlBtn>
        <CtrlBtn><Max s={10} /></CtrlBtn>
        <CtrlBtn><Close /></CtrlBtn>
      </CtrlRow>
    </RarTitle>
    <RarMenu>
      {["File", "Commands", "Tools", "Favorites", "Options", "Help"].map(m => <span key={m}>{m}</span>)}
    </RarMenu>
    <RarToolbar>
      <Grip />
      {TOOLS.map((t, i) => t === null
        ? <ToolSep key={i} />
        : <Tool key={t[0]} $w={t[1]}><ToolArt>{t[2]}</ToolArt>{t[0]}</Tool>)}
    </RarToolbar>
    <AddressRow>
      <UpCell>
        <svg width="12" height="13" viewBox="0 0 12 13"><path d="M6 1L1 6h3v7h4V6h3z" fill="#8a8f94" /></svg>
        <AddressGrip />
      </UpCell>
      <Combo>
        <RarIcon s={17} />
        snapshot_2025-03-15_15-57.zip - ZIP archive, unpacked size 92,776,450 bytes
        <Chevron c="#333" />
      </Combo>
    </AddressRow>
    <ListGap />
    <ListPane>
      <SortCaret><svg width="9" height="5" viewBox="0 0 9 5"><path d="M.5 4.500l4-4 4 4" stroke="#888" fill="none" /></svg></SortCaret>
      <ListHead>
        <HeadCell $i={8}>Name</HeadCell>
        <HeadCell $r>Size</HeadCell>
        <HeadCell $r>Packed</HeadCell>
        <HeadCell $i={6}>Type</HeadCell>
        <HeadCell $i={6}>Modified</HeadCell>
        <HeadCell $i={6}>CRC32</HeadCell>
      </ListHead>
      <ListRow $on>
        <NameCell><MiniFolder c="#8aa9b5" />..</NameCell>
        <ListCell $r /><ListCell $r />
        <ListCell $i={6}>File folder</ListCell>
        <ListCell $i={6} /><ListCell $i={6} />
      </ListRow>
      {ROWS.map(r => (
        <ListRow key={r.name}>
          <NameCell>{r.icon}{r.name}</NameCell>
          <ListCell $r>{r.size}</ListCell>
          <ListCell $r>{r.packed}</ListCell>
          <ListCell $i={6}>{r.type}</ListCell>
          <ListCell $i={6}>{r.mod}</ListCell>
          <ListCell $i={6}>{r.crc}</ListCell>
        </ListRow>
      ))}
    </ListPane>
    <RarStatus>
      <StatusCell $w={42}>
        <svg width="34" height="10" viewBox="0 0 34 10"><rect x="0" y="2" width="15" height="6" fill="#666" stroke="#aaa" /><path d="M19 5h8" stroke="#999" strokeWidth="3" /><circle cx="29" cy="5" r="4" fill="#ddd" stroke="#666" /></svg>
      </StatusCell>
      <StatusCell $w={450} />
      <StatusText>
        Total 2 folders, 1 file, 92,776,450 bytes
        <svg width="9" height="9" viewBox="0 0 9 9"><path d="M7 1h1v1H7zM4 4h1v1H4zM7 4h1v1H7zM1 7h1v1H1zM4 7h1v1H4zM7 7h1v1H7z" fill="#888" /></svg>
      </StatusText>
    </RarStatus>
  </RarFrame>
);

const BottomBar = () => (
  <Taskbar>
    <Start><LogoWin /></Start>
    <SearchField><Magnifier />Type here to search</SearchField>
    <TaskApp $w={50}>
      <svg width="16" height="16" viewBox="0 0 16 16"><rect x="1.500" y="3.500" width="10" height="9" fill="none" stroke="#fff" /><path d="M1 .5h11M1 15.500h11M14 1v3M14 7v2M14 12v2" stroke="#fff" /></svg>
    </TaskApp>
    <TaskApp $w={49}><EdgeIcon s={25} /></TaskApp>
    <TaskApp $w={48}><ExplorerApp /><Running /></TaskApp>
    <TaskApp $w={51}><Firefox s={24} h={46} /><Running /></TaskApp>
    <TaskApp $w={49}><Chrome s={24} /><Running /></TaskApp>
    <TaskApp $w={48} $on><RarIcon s={24} /><Running $full /></TaskApp>
    <Tray>
      <TrayIcon><svg width="12" height="7" viewBox="0 0 12 7"><path d="M1 6l5-5 5 5" stroke="#fff" fill="none" /></svg></TrayIcon>
      <TrayIcon><svg width="14" height="16" viewBox="0 0 14 16"><rect x="1.500" y="4.500" width="7" height="7" rx="2" fill="none" stroke="#fff" /><path d="M9 7l4-2v6l-4-2M3 1h4M3 15h4" stroke="#fff" fill="none" /></svg></TrayIcon>
      <TrayIcon><svg width="17" height="15" viewBox="0 0 17 15"><path d="M4.500 2.500h12v9h-12zM10 11.500v3M7 14.500h6" stroke="#fff" fill="none" /><rect x=".5" y=".5" width="4" height="5" fill="#111" stroke="#fff" /></svg></TrayIcon>
      <TrayIcon><svg width="17" height="15" viewBox="0 0 17 15"><path d="M1 5h3l4-4v13l-4-4H1zM10.500 5c1 1.500 1 3.500 0 5M12.500 3c2 2.500 2 6.500 0 9M14.500 1c3 3.500 3 9.500 0 13" stroke="#fff" fill="none" /></svg></TrayIcon>
      <Clock><span>8:03 PM</span><span>3/18/2025</span></Clock>
      <Notify>
        <svg width="16" height="14" viewBox="0 0 16 14"><path d="M0 0h16v11H7l-3 3v-3H0z" fill="#fff" /><path d="M3 3h10M3 5.500h10M3 8h7" stroke="#333" /></svg>
        <NotifyCount>1</NotifyCount>
      </Notify>
      <ShowDesktop />
    </Tray>
  </Taskbar>
);

export default function App() {
  return (
    <>
      <Global />
      <Desktop>
        {SHORTCUTS.map((s, i) => (
          <Shortcut key={i} $x={s.x} $y={s.y}>
            <ShortcutArt>
              {s.art}
              {s.link && <ShortcutBadge><Arrow /></ShortcutBadge>}
            </ShortcutArt>
            {s.label && <ShortcutLabel>{s.label}</ShortcutLabel>}
          </Shortcut>
        ))}
        <Browser />
        <Explorer />
        <WinRar />
        <BottomBar />
        <Watermark>
          <WmText $w={68} $s={0.6}>ANY</WmText>
          <svg width="60" height="58" viewBox="0 0 60 58">
            <path d="M3 10v38M9 7v44M15 10v38" stroke="rgba(170,175,185,.5)" strokeWidth="3.500" fill="none" />
            <path d="M18 2l38 27-38 27" stroke="rgba(170,175,185,.4)" strokeWidth="5" fill="none" />
            <path d="M44 15l13 14-13 14" stroke="rgba(170,175,185,.5)" strokeWidth="3" fill="none" />
          </svg>
          <WmText $w={62} $s={0.53}>RUN</WmText>
        </Watermark>
      </Desktop>
    </>
  );
}
